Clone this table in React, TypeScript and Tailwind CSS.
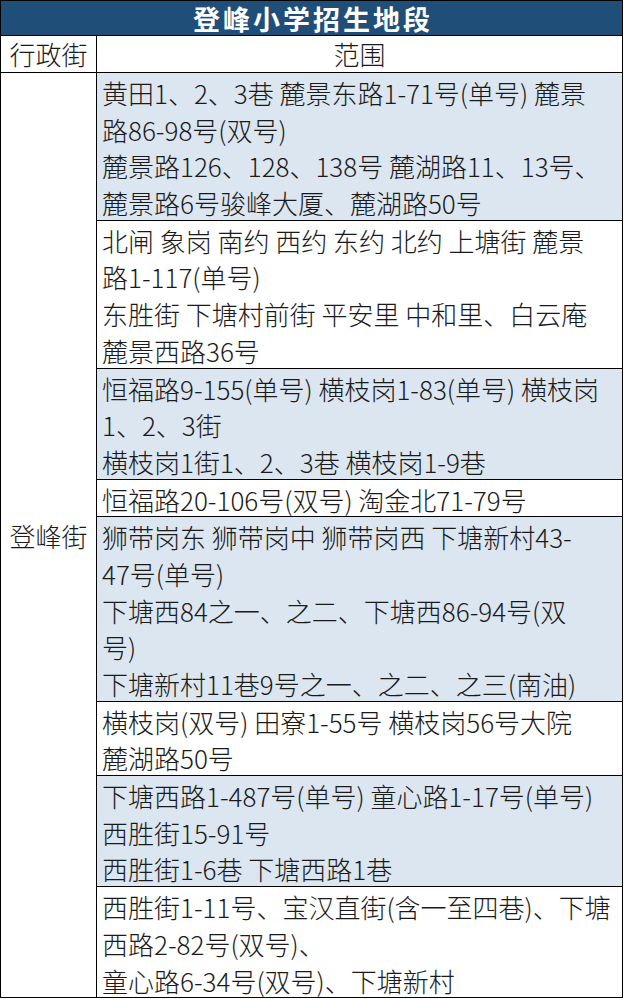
const ROWS: readonly { lines: readonly string[]; shaded: boolean }[] = [
  {
    shaded: true,
    lines: [
      "黄田1、2、3巷 麓景东路1-71号(单号) 麓景",
      "路86-98号(双号)",
      "麓景路126、128、138号 麓湖路11、13号、",
      "麓景路6号骏峰大厦、麓湖路50号",
    ],
  },
  {
    shaded: false,
    lines: [
      "北闸 象岗 南约 西约 东约 北约 上塘街 麓景",
      "路1-117(单号)",
      "东胜街 下塘村前街 平安里 中和里、白云庵",
      "麓景西路36号",
    ],
  },
  {
    shaded: true,
    lines: [
      "恒福路9-155(单号) 横枝岗1-83(单号) 横枝岗",
      "1、2、3街",
      "横枝岗1街1、2、3巷 横枝岗1-9巷",
    ],
  },
  {
    shaded: false,
    lines: ["恒福路20-106号(双号) 淘金北71-79号"],
  },
  {
    shaded: true,
    lines: [
      "狮带岗东 狮带岗中 狮带岗西 下塘新村43-",
      "47号(单号)",
      "下塘西84之一、之二、下塘西86-94号(双",
      "号)",
      "下塘新村11巷9号之一、之二、之三(南油)",
    ],
  },
  {
    shaded: false,
    lines: ["横枝岗(双号) 田寮1-55号 横枝岗56号大院", "麓湖路50号"],
  },
  {
    shaded: true,
    lines: [
      "下塘西路1-487号(单号) 童心路1-17号(单号)",
      "西胜街15-91号",
      "西胜街1-6巷 下塘西路1巷",
    ],
  },
  {
    shaded: false,
    lines: [
      "西胜街1-11号、宝汉直街(含一至四巷)、下塘",
      "西路2-82号(双号)、",
      "童心路6-34号(双号)、下塘新村",
    ],
  },
];

export default function App() {
  return (
    <main
      className="min-h-screen bg-white text-[#1a1a1a]"
      style={{ fontFamily: '"Noto Sans CJK SC", "Noto Sans", sans-serif' }}
    >
      <div className="w-[623px] border border-black">
        <div className="flex h-[35px] items-center justify-center border-b border-black bg-[#1f4e78] pl-[3px] text-[27px] font-bold leading-none tracking-[3px] text-white">
          登峰小学招生地段
        </div>

        <div className="flex h-[37px] border-b border-black text-[26px] font-light leading-[36px]">
          <div className="w-[96px] shrink-0 border-r border-black text-center">行政街</div>
          <div className="flex-1 text-center">范围</div>
        </div>

        <div className="flex">
          <div className="flex w-[96px] shrink-0 items-center justify-center border-r border-black text-[26px] font-light">
            登峰街
          </div>
          <div className="flex-1">
            {ROWS.map((row, i) => (
              <AreaRow key={i} lines={row.lines} shaded={row.shaded} first={i === 0} />
            ))}
          </div>
        </div>
      </div>
    </main>
  );
}

function AreaRow({
  lines,
  shaded,
  first,
}: {
  readonly lines: readonly string[];
  readonly shaded: boolean;
  readonly first: boolean;
}) {
  return (
    <div
      className={`${first ? "" : "border-t border-black"} ${
        shaded ? "bg-[#dce6f1]" : "bg-white"
      } pl-[5px] text-[26px] font-light`}
    >
      {lines.map((line) => (
        <div key={line} className="h-[36.7px] whitespace-nowrap pt-[4px] leading-[32.7px]">
          {line}
        </div>
      ))}
    </div>
  );
}
